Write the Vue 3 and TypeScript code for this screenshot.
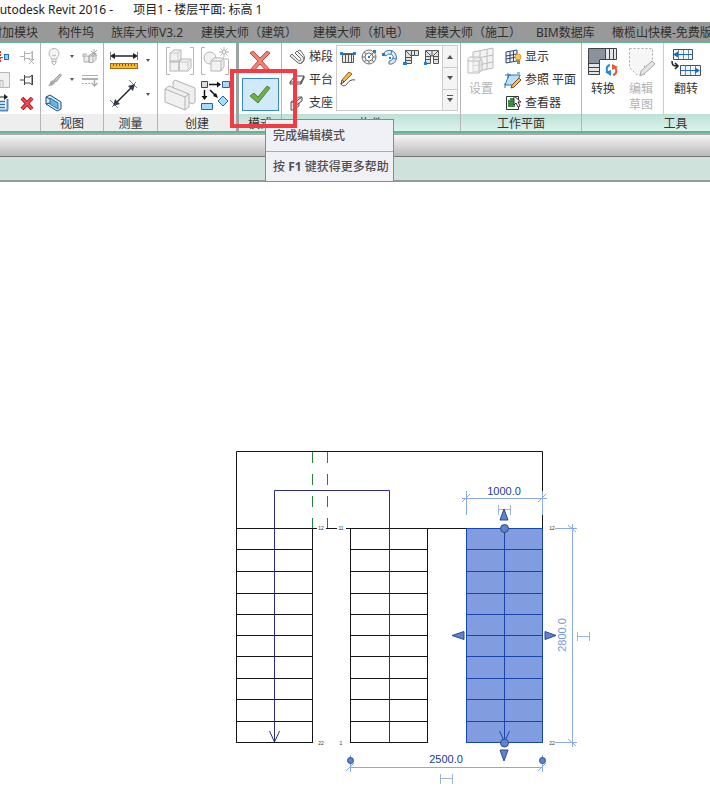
<script setup lang="ts">
interface Label {
  text: string
  x: number
  y: number
}

const tabs: string[] = [
  '附加模块',
  '构件坞',
  '族库大师V3.2',
  '建模大师（建筑）',
  '建模大师（机电）',
  '建模大师（施工）',
  'BIM数据库',
  '橄榄山快模-免费版',
]

const treadRows: number[] = [528, 549, 571, 593, 614, 635, 656, 678, 699, 721, 742]
const flights: number[] = [236, 351, 466]

const riserLabels: Label[] = [
  { text: '12', x: 321, y: 530 },
  { text: '11', x: 341, y: 530 },
  { text: '12', x: 552, y: 530 },
  { text: '22', x: 321, y: 745 },
  { text: '1', x: 341, y: 745 },
  { text: '22', x: 552, y: 745 },
]

const treads = (x: number, rows: number[]): string =>
  rows.map((y) => `M${x} ${y + 0.5}h77`).join('')
</script>

<template>
  <div class="app">
    <header class="title-bar">
      <span class="product">Autodesk Revit 2016 -</span>
      <span>项目1 - 楼层平面: 标高 1</span>
    </header>

    <nav class="tabs">
      <a v-for="tab in tabs" :key="tab" href="#">{{ tab }}</a>
    </nav>

    <div class="ribbon">
      <section class="panel modify">
        <div class="body icon-grid edit-grid">
          <button aria-label="对齐">
            <svg width="20" height="18" viewBox="0 0 20 18"><path d="M10.500 3v12" stroke="#d33" stroke-dasharray="2 1" /><path d="M0 9.500h13" stroke="#d33" stroke-dasharray="3 2" /><rect x="14.500" y="6.500" width="4" height="5" fill="#9cd0f5" stroke="#2470b8" /></svg>
          </button>
          <button aria-label="解锁">
            <svg width="18" height="18" viewBox="0 0 18 18" fill="none" stroke="#b4b4b4"><path d="M2 8.500h4M6.500 3v10M7 5.500h5l2-2v9l-2-2H7M14.500 3v9M11 11l5 5M16 11l-5 5" /></svg>
          </button>
          <button aria-label="缩放">
            <svg width="20" height="18" viewBox="0 0 20 18" fill="#f0f0f0" stroke="#b8b8b8"><path d="M3 1.500h16.500v15H10v-8H3z" /><path d="M4 9.500h9v7" fill="none" /></svg>
          </button>
          <button aria-label="锁定">
            <svg width="18" height="18" viewBox="0 0 18 18" fill="#fff" stroke="#444"><path d="M2 9h4M6.500 4v10M7 6h5l2-2v10l-2-2H7M14.500 4v10" /></svg>
          </button>
          <button aria-label="偏移">
            <svg width="20" height="18" viewBox="0 0 20 18"><path d="M7 3h9" stroke="#222" /><path d="M14 0l4 3-4 3z" fill="#222" /><path d="M6 7.500h9M6 10.500h9M6 13.500h9" fill="none" stroke="#2b76b8" stroke-width="1.500" /><path d="M17.500 5v11M6 16.500h12" fill="none" stroke="#4f91ce" stroke-width="2" /></svg>
          </button>
          <button aria-label="删除">
            <svg width="18" height="18" viewBox="0 0 18 18"><path d="M4 4l10 11M14 4L4 15" stroke="#a5131c" stroke-width="4" /><path d="M4 4l10 11M14 4L4 15" stroke="#f04a50" stroke-width="2" /></svg>
          </button>
        </div>
        <h2></h2>
      </section>

      <section class="panel view">
        <div class="body icon-grid view-grid">
          <button aria-label="隐藏">
            <svg width="16" height="18" viewBox="0 0 16 18" fill="#f5f5f5" stroke="#b5b5b5"><path d="M5.500 11C5 9 3 8 3 5.500a5 5 0 0 1 10 0C13 8 11 9 10.500 11zM6 11v4l2 2 2-2v-4M6 13.500h4M6 7l2 1 2-1" /></svg>
          </button>
          <i class="caret"></i>
          <button aria-label="替换">
            <svg width="18" height="18" viewBox="0 0 18 18" fill="#eee" stroke="#aaa"><path d="M2 9V6h4M3 8h5v6H3zM8 7.500l3-2h4v6l-3 3H8zM8 8h4v6M12 8l3-2.500M10 3l6 5M16 2l-6 6M13 1v8" /></svg>
          </button>
          <button aria-label="画笔">
            <svg width="16" height="18" viewBox="0 0 16 18"><path d="M8 9l6-6 1.500 1L10 11z" fill="#c8c8c8" stroke="#999" /><path d="M1 15c3 0 2-3 4-5s5 0 4 2c-2 3-5 3-8 3z" fill="#aaa" /></svg>
          </button>
          <i class="caret"></i>
          <button aria-label="线处理">
            <svg width="18" height="18" viewBox="0 0 18 18" fill="none" stroke="#b0b0b0"><path d="M1 4.500h16" /><path d="M1 8h16" stroke-width="2" /><path d="M1 12.500h9" stroke-dasharray="2 1" /><path d="M13.500 9v5M10.500 12l3 3 3-3" stroke-width="1.500" /></svg>
          </button>
          <button aria-label="选择框">
            <svg width="18" height="18" viewBox="0 0 18 18" stroke-linejoin="round"><path d="M1 3l4-2 11 7v7l-4 2L1 10z" fill="#cceafd" stroke="#24496d" /><path d="M5 4l8 5v6l-8-5z" fill="#64b4e9" stroke="#2b75af" /><path d="M1 3l4 2M1 10l4-1" fill="none" stroke="#24496d" /></svg>
          </button>
        </div>
        <h2>视图</h2>
      </section>

      <section class="panel measure">
        <div class="body measure-grid">
          <button aria-label="测量">
            <svg width="30" height="24" viewBox="0 0 30 24"><path d="M3 8h24" stroke="#222" stroke-width="1.500" /><path d="M1 8l5-3v6zM29 8l-5-3v6z" fill="#222" /><path d="M1.500 4v8M28.500 4v8" stroke="#777" /><rect x="1.500" y="15.500" width="27" height="5" fill="#f8b72e" stroke="#a56e0a" /><path d="M4.500 16v2M7.500 16v2M10.500 16v2M13.500 16v2M16.500 16v2M19.500 16v2M22.500 16v2M25.500 16v2" stroke="#855706" /></svg>
          </button>
          <i class="caret"></i>
          <button aria-label="对齐尺寸标注">
            <svg width="30" height="32" viewBox="0 0 30 32"><path d="M1 22l8 8M20 2l8 8M3 29l5-5M22 9l5-5" stroke="#7b8290" /><path d="M7 25L24 8" stroke="#222" stroke-width="1.500" /><path d="M4 28l2-7 5 5zM26 6l-7 2 5 5z" fill="#333b4d" /></svg>
          </button>
          <i class="caret"></i>
        </div>
        <h2>测量</h2>
      </section>

      <section class="panel create">
        <div class="body create-grid">
          <button aria-label="创建部件">
            <svg width="30" height="30" viewBox="0 0 30 30" fill="#f2f2f2" stroke="#b5b5b5"><path d="M5 1.500H1.500v27H5M25 1.500h3.500v27H25" fill="none" /><path d="M5 7l4-3h7v9l-3 3H5zM5 15h9v10H5zM14 16l3-3h9v9l-3 3h-9z" /><path d="M5 7h8v9M13 7l3-3M14 16h9v9M23 16l3-3" fill="none" stroke="#c8c8c8" /></svg>
          </button>
          <button aria-label="创建组">
            <svg width="30" height="30" viewBox="0 0 30 30" fill="#f2f2f2" stroke="#b5b5b5"><path d="M5 1.500H1.500v27H5M25 13h3.500v15.500H25" fill="none" /><circle cx="10" cy="12" r="6" /><path d="M11 15l3-3h10v9l-3 4H11z" /><path d="M11 15h10v10M21 15l3-3" fill="none" /><path d="M24 1v10M19 6h10M20.500 2.500l7 7M27.500 2.500l-7 7" /><circle cx="24" cy="6" r="2" /></svg>
          </button>
          <button aria-label="创建零件">
            <svg width="32" height="32" viewBox="0 0 32 32" fill="#f0f0f0" stroke="#b2b2b2" stroke-linejoin="round"><path d="M9 3l2-2 20 8v14l-2 2L9 17z" /><path d="M1 10l4-3 20 8v13l-4 3L1 23z" /><path d="M1 10l20 8v13M21 18l4-3" fill="none" /></svg>
          </button>
          <button aria-label="创建类似实例">
            <svg width="30" height="32" viewBox="0 0 30 32"><path d="M1.500 2.500h6v6h-6z" fill="#ddd" stroke="#444" /><path d="M22.500 2.500h7v6h-7zM1.500 24.500h11v6h-11zM23 17l5 5-5 5-5-5z" fill="#a4dbff" stroke="#27669d" /><path d="M9 5.500h9M4.500 11v7M10 11l6 6" stroke="#111" stroke-width="1.500" /><path d="M21 5.500l-4-3v6zM4.500 21l-3-4h6zM18 19l-5-2 3-3z" fill="#111" /></svg>
          </button>
        </div>
        <h2>创建</h2>
      </section>

      <section class="panel mode contextual">
        <div class="body mode-body">
          <button aria-label="取消编辑模式">
            <svg width="24" height="24" viewBox="0 0 24 24"><path d="M2 4l3-2 7 7 7-7 3 2-8 8 8 9-3 2-7-8-7 8-3-2 8-9z" fill="#f08275" stroke="#cc4a40" /></svg>
          </button>
          <button class="finish" aria-label="完成编辑模式">
            <svg width="24" height="22" viewBox="0 0 24 22"><path d="M2 12l4-3 4 4L19 2l3 2-12 15z" fill="#70ae4c" stroke="#4a8536" /></svg>
          </button>
        </div>
        <h2>模式</h2>
      </section>

      <section class="panel component contextual">
        <div class="body component-body">
          <div class="list">
            <button>
              <svg width="18" height="18" viewBox="0 0 18 18" fill="#eee" stroke="#666"><path d="M2 8l2-2 6 6c2 2 4 0 2-2L7 5l2-2 6 6c3 4-2 9-6 5z" /><path d="M10 3l2-1 3 4c3 4 1 7-2 9" fill="none" /><path d="M4 6l5 5M9 3l5 5" /></svg>
              <span>梯段</span>
            </button>
            <button>
              <svg width="18" height="18" viewBox="0 0 18 18" fill="#fff" stroke="#444"><path d="M2 11l5-6h9l-3 6zM2 11v2h11l3-6V5M13 11v2" /></svg>
              <span>平台</span>
            </button>
            <button>
              <svg width="18" height="18" viewBox="0 0 18 18" fill="#e6e6e6" stroke="#555"><path d="M3 8l8-5h3v4l-3 2v3l-3 2v2H3zM3 8h4v8M7 8l7-5M7 12l4-3" /></svg>
              <span>支座</span>
            </button>
          </div>
          <div class="gallery">
            <div class="shapes">
              <button aria-label="直梯">
                <svg width="16" height="16" viewBox="0 0 16 16"><path d="M2.500 5.500h11v8h-11zM5.500 5v9M8.500 5v9M11.500 5v9" fill="#eee" stroke="#555" /><path d="M1 4.500h14" stroke="#2574b4" /><path d="M0 3h3v3H0zM13 3h3v3h-3z" fill="#2a83ca" /></svg>
              </button>
              <button aria-label="全踏步螺旋">
                <svg width="16" height="16" viewBox="0 0 16 16" fill="#eee" stroke="#777"><circle cx="8" cy="8" r="7" /><circle cx="8" cy="8" r="4" fill="#fff" /><path d="M1 8h3M12 8h3M8 12v3M3 3l2 2M3 13l2-2M13 13l-2-2" /><path d="M8 8l5-5" stroke="#247fc3" /><path d="M12 1h3v3h-3zM7 7h2v2H7z" fill="#247fc3" stroke="none" /></svg>
              </button>
              <button aria-label="圆心端点螺旋">
                <svg width="16" height="16" viewBox="0 0 16 16"><path d="M1 5c3-5 11-5 13 1s-3 10-7 9v-3c3 0 5-3 4-5S6 4 4 7z" fill="#dceaf5" stroke="#4278aa" /><path d="M10 1L9 5M14 10l-4-1" stroke="#4278aa" /><path d="M0 4h3v3H0zM7 8h2v2H7z" fill="#247fc3" /></svg>
              </button>
              <button aria-label="L形转角">
                <svg width="16" height="16" viewBox="0 0 16 16"><path d="M2.500 1.500h13v5h-7v8h-6zM2 1l6 6M8.500 1v6M11.500 1v6M2 8.500h6M2 11.500h6" fill="#e2e2e2" stroke="#555" /><path d="M0 13h4v3H0z" fill="#247fc3" /></svg>
              </button>
              <button aria-label="U形转角">
                <svg width="16" height="16" viewBox="0 0 16 16"><path d="M1.500 1.500h13v13h-5V7h-3v7.500h-5zM2 2l5 5M8 2v5M14 2L9 7M2 7.500h4M2 10.500h4M10 7.500h4M10 10.500h4" fill="#e2e2e2" stroke="#555" /><path d="M0 13h3v3H0z" fill="#247fc3" /></svg>
              </button>
              <button aria-label="创建草图">
                <svg width="16" height="16" viewBox="0 0 16 16"><path d="M2 9L9 1l3 2-8 8z" fill="#f9bd3d" stroke="#8b5b1d" /><path d="M2 9l-1 4 3-2zM1 12c0 4 5 3 6 1s4-5 8-4" fill="none" stroke="#444" /></svg>
              </button>
            </div>
            <div class="scroller">
              <button aria-label="上一行"><i class="caret up"></i></button>
              <button aria-label="下一行"><i class="caret"></i></button>
              <button aria-label="展开"><i class="caret more"></i></button>
            </div>
          </div>
        </div>
        <h2>构件</h2>
      </section>

      <section class="panel plane contextual">
        <div class="body plane-body">
          <button class="large muted">
            <svg width="30" height="32" viewBox="0 0 30 32" fill="#f3f3f3" stroke="#bcbcbc" stroke-linejoin="round"><path d="M7 6l20-4v20L7 26zM14 5v20M21 3v20M7 13l20-4M7 20l20-4" /><path d="M2 14c0-2 1-3 3-3h8l3 3v10l-3 3H2zM2 15h11v12M13 15l3-2" fill-opacity=".5" /></svg>
            <span>设置</span>
          </button>
          <div class="list">
            <button>
              <svg width="18" height="18" viewBox="0 0 18 18"><path d="M2 4l11-2v11L2 15zM6 3v11M9.500 3v10M2 8l11-2M2 11l11-2" fill="#edf2fa" stroke="#324968" /><circle cx="14" cy="9" r="3" fill="#ffc550" stroke="#e0992c" /><path d="M13 12h3v4h-3z" fill="#a9824a" /></svg>
              <span>显示</span>
            </button>
            <button>
              <svg width="18" height="18" viewBox="0 0 18 18"><path d="M5 4h11l-4 10H1z" fill="#bddfff" stroke="#2674b9" /><path d="M4 2v5M1 4h6M1 12v5M13 2h3" stroke="#2674b9" /><path d="M8 14l7-7 2 2-7 7-3 1z" fill="#ffbe51" stroke="#7b4d25" /></svg>
              <span>参照 平面</span>
            </button>
            <button>
              <svg width="18" height="18" viewBox="0 0 18 18"><path d="M2.500 2.500h12v13h-12z" fill="#fff" stroke="#333" /><path d="M4 6h2V4h5v9H4z" fill="#3e8c41" /><path d="M10 2v9l2-2 2 4 2-1-2-4h3z" fill="#fff" stroke="#333" /></svg>
              <span>查看器</span>
            </button>
          </div>
        </div>
        <h2>工作平面</h2>
      </section>

      <section class="panel tools contextual">
        <div class="body tools-body">
          <button class="large">
            <svg width="32" height="32" viewBox="0 0 32 32"><path d="M1.500 2.500h28v11h-17v15h-11z" fill="#e2e5e9" stroke="#3f4348" /><path d="M2 3h16v10h-6v4H2z" fill="#8b929b" /><path d="M18.500 3v10M22.500 3v10M26.500 3v10M2 17.500h10M2 21.500h10M2 25.500h10" stroke="#3f4348" /><path d="M23 19c-4 1-4 5-2 8" fill="none" stroke="#248bd7" stroke-width="2" /><path d="M18 26l6-2v6z" fill="#248bd7" /><path d="M26 29c4-1 4-5 2-8" fill="none" stroke="#ee5830" stroke-width="2" /><path d="M31 21l-6 3v-6z" fill="#ee5830" /></svg>
            <span>转换</span>
          </button>
          <button class="large muted">
            <svg width="32" height="32" viewBox="0 0 32 32"><path d="M4.500 2.500h23v17h-8v9h-8l-7-7z" fill="#f6f6f6" stroke="#aaa" stroke-dasharray="2 2" /><path d="M16 25l11-10 3 3-11 10-4 2z" fill="#e4e4e4" stroke="#aaa" /></svg>
            <span>编辑<br />草图</span>
          </button>
          <button class="large flip">
            <svg width="32" height="32" viewBox="0 0 32 32"><path d="M3.500 3.500h19v10h-19zM10.500 19.500h20v10h-20z" fill="#f1f5fb" stroke="#455266" /><path d="M8.500 4v9M13.500 4v9M18.500 4v9M15.500 20v9M20.500 20v9M25.500 20v9" stroke="#7c899a" /><path d="M4 8.500h18M11 24.500h18" stroke="#176bc0" /><path d="M3 8.500l5-3v6zM30 24.500l-5-3v6z" fill="#176bc0" /><path d="M2 15c0 4 1 5 5 5M5 17l3 3-3 3" fill="none" stroke="#222" stroke-width="1.500" /></svg>
            <span>翻转</span>
          </button>
        </div>
        <h2>工具</h2>
      </section>

      <div class="tooltip" role="tooltip">
        <p>完成编辑模式</p>
        <p>按 <b>F1</b> 键获得更多帮助</p>
      </div>
      <div class="highlight"></div>
    </div>

    <div class="strip"></div>
    <div class="options"></div>

    <main>
      <svg class="plan" viewBox="0 182 710 624" role="img" aria-label="楼梯平面">
        <g fill="none" stroke="#151515">
          <path d="M236.500 742V451.500H542.500V528" />
          <path d="M236 528.500H317M326 528.500H337M346 528.500H466" />
          <path v-for="x in flights.slice(0, 2)" :key="x" :d="treads(x, treadRows.slice(1))" />
          <path d="M312.500 528V743M350.500 528V743M427.500 528V743" />
        </g>
        <path d="M312.500 452V528M327.500 452V528" stroke="#238336" stroke-dasharray="11 11" />
        <g fill="none" stroke="#2b2b8c">
          <path d="M389.500 742V490.500H274.500V742" />
          <path d="M269.500 731L274.500 742L279.500 731" />
        </g>

        <g stroke="#1745ad" fill="none">
          <rect x="466.500" y="528.500" width="76" height="214" fill="#819de0" />
          <path :d="treads(466, treadRows)" />
          <path d="M504.500 528V742M499.500 731L504.500 742L509.500 731" />
        </g>

        <g class="dimension">
          <path d="M462 498.500H547M466.500 491V515M542.500 491V515M462 502L470 494M538 502L546 494" />
          <path d="M555 528.500H577M555 742.500H577M572.500 524V747M568 525L576 532M568 739L576 746" />
          <path d="M350 767.500H543M350.500 755V772M542.500 755V772M346 771L354 763M538 771L546 763" />
        </g>
        <g class="toggle">
          <path d="M498.500 505V515M510.500 505V515M499 509.500H510" />
          <path d="M577.500 632V641M589.500 632V641M578 636.500H589" />
          <path d="M440.500 774V784M452.500 774V784M441 778.500H452" />
        </g>
        <g class="grip">
          <path d="M504 509L508 520H500zM504 761L508 750H500zM452 635.500L464 631.500V639.500zM556 635.500L545 631.500V639.500z" />
          <circle cx="504.500" cy="528.500" r="4" />
          <circle cx="504.500" cy="743" r="4" />
          <circle cx="350.500" cy="760.500" r="3" />
          <circle cx="542.500" cy="760.500" r="3" />
        </g>
        <g class="value">
          <text x="504" y="495">1000.0</text>
          <text x="446" y="763">2500.0</text>
          <text class="light" transform="translate(566 635) rotate(-90)">2800.0</text>
        </g>
        <text v-for="l in riserLabels" :key="`${l.x}-${l.y}`" class="riser" :x="l.x" :y="l.y">{{ l.text }}</text>
      </svg>
    </main>
  </div>
</template>

<style>
body {
  margin: 0;
  background: #fff;
}
</style>

<style scoped>
.app {
  overflow: hidden;
  color: #333;
  font: 12px/16px 'Noto Sans', 'Noto Sans CJK SC', sans-serif;
}

.title-bar {
  display: flex;
  gap: 20px;
  height: 22px;
  line-height: 20px;
  color: #222;
  white-space: pre;
}

.product {
  margin-left: -8px;
}

.tabs {
  display: grid;
  grid-template-columns: 68px 53px 90px 112px 112px 111px 76px 1fr;
  height: 19px;
  margin-left: -10px;
  background: #999;
  line-height: 22px;
  white-space: nowrap;
}

.tabs a {
  color: #303030;
  text-decoration: none;
}

button {
  display: flex;
  align-items: center;
  justify-content: center;
  min-width: 0;
  padding: 0;
  border: 0;
  background: none;
  color: inherit;
  font: inherit;
}

svg {
  display: block;
  flex: none;
}

.ribbon {
  position: relative;
  display: flex;
  border-top: 2px solid #62b598;
  border-bottom: 2px solid #62b598;
}

.panel {
  display: flex;
  flex: none;
  flex-direction: column;
  box-sizing: border-box;
  border-right: 1px solid #b5b5b5;
  background: #fff;
}

.body {
  box-sizing: border-box;
  height: 71px;
  padding-top: 2px;
}

h2 {
  height: 17px;
  margin: 0;
  background: #eee;
  font-size: 12px;
  font-weight: 400;
  line-height: 20px;
  text-align: center;
}

.contextual h2 {
  background: linear-gradient(#bde0d6, #dcf3ec);
}

.modify {
  width: 41px;
}

.view {
  width: 63px;
}

.measure {
  width: 54px;
}

.create {
  width: 81px;
  border-right: 3px solid #9aa5a2;
}

.mode {
  width: 43px;
}

.component {
  width: 179px;
}

.plane {
  width: 121px;
}

.tools {
  width: 188px;
}

.icon-grid {
  display: grid;
  grid-template-rows: repeat(3, 23px);
  align-items: center;
  justify-content: center;
}

.edit-grid {
  grid-template-columns: 20px 18px;
  column-gap: 8px;
  justify-content: end;
  padding-right: 4px;
}

.view-grid {
  grid-template-columns: 18px 10px 18px;
  column-gap: 4px;
}

.caret {
  justify-self: center;
  border: 2px solid transparent;
  border-top: 3px solid #555;
  border-bottom: 0;
}

.measure-grid {
  display: grid;
  grid-template-columns: 30px 10px;
  grid-template-rows: 30px 38px;
  column-gap: 4px;
  align-items: center;
  justify-content: center;
}

.create-grid {
  display: grid;
  grid-template-columns: 32px 30px;
  grid-template-rows: 32px 36px;
  column-gap: 4px;
  justify-content: center;
}

.mode-body {
  display: flex;
  flex-direction: column;
  align-items: center;
  gap: 3px;
  padding-top: 6px;
}

.mode .finish {
  width: 37px;
  height: 33px;
  margin-top: 2px;
  border: 1px solid #3989c5;
  background: #d2e9f9;
}

.component-body {
  display: flex;
  justify-content: space-between;
  padding-right: 2px;
  padding-left: 6px;
}

.list {
  display: grid;
  grid-template-rows: repeat(3, 23px);
  justify-items: start;
}

.list button {
  gap: 3px;
  white-space: nowrap;
}

.gallery {
  display: flex;
  box-sizing: border-box;
  width: 122px;
  height: 66px;
  border: 1px solid #ccc;
}

.shapes {
  display: grid;
  flex: 1;
  grid-template-columns: repeat(5, 21px);
  grid-template-rows: repeat(2, 22px);
}

.scroller {
  display: grid;
  grid-template-rows: 1fr 1fr 1fr;
  width: 14px;
  border-left: 1px solid #ccc;
  background: #f4f4f4;
}

.scroller button + button {
  border-top: 1px solid #ccc;
}

.scroller .caret {
  border-width: 4px 3px 0;
}

.scroller .up {
  border-top: 0;
  border-bottom: 4px solid #555;
}

.scroller .more {
  position: relative;
}

.scroller .more::before {
  position: absolute;
  top: -7px;
  left: -3px;
  width: 6px;
  height: 1px;
  background: #555;
  content: '';
}

.large {
  flex-direction: column;
  gap: 3px;
  align-self: start;
  padding-top: 1px;
}

.muted {
  color: #b2b2b2;
}

.plane-body {
  display: flex;
  gap: 8px;
  padding-left: 5px;
}

.tools-body {
  display: flex;
  gap: 6px;
  padding-top: 0;
  padding-left: 5px;
}

.tools .large {
  padding-top: 3px;
}

.tools .flip {
  align-self: stretch;
  justify-content: flex-start;
  padding-left: 6px;
  border-left: 1px solid #ccc;
}

.tooltip {
  position: absolute;
  top: 76px;
  left: 265px;
  z-index: 2;
  box-sizing: border-box;
  width: 129px;
  border: 1px solid #8a8a8a;
  background: #f0f0f7;
  color: #505050;
  font-weight: 500;
}

.tooltip p {
  margin: 0;
  padding: 8px 0 7px 7px;
  white-space: nowrap;
}

.tooltip p + p {
  padding: 7px 0 6px 7px;
  border-top: 1px solid #aaa;
}

.highlight {
  position: absolute;
  top: 26px;
  left: 230px;
  z-index: 3;
  box-sizing: border-box;
  width: 67px;
  height: 59px;
  border: 4px solid #f23b42;
}

.strip {
  height: 21px;
  border-top: 2px solid #aaa;
  border-bottom: 1px solid #777;
  background: linear-gradient(#f6f6f6, #b9b9b9);
}

.options {
  height: 23px;
  border-bottom: 2px solid #929a97;
  background: #d0e2dc;
}

.plan {
  width: 100%;
  height: auto;
}

.dimension {
  fill: none;
  stroke: #8aa9ed;
}

.toggle {
  fill: none;
  stroke: #9bb4df;
}

.grip {
  fill: #5d84cc;
  stroke: #2c4a86;
}

.value {
  fill: #173d95;
  font: 11px 'Liberation Sans', sans-serif;
  text-anchor: middle;
}

.value .light {
  fill: #7896d6;
}

.riser {
  fill: #333;
  font: 5px 'Liberation Sans', sans-serif;
  text-anchor: middle;
}
</style>
